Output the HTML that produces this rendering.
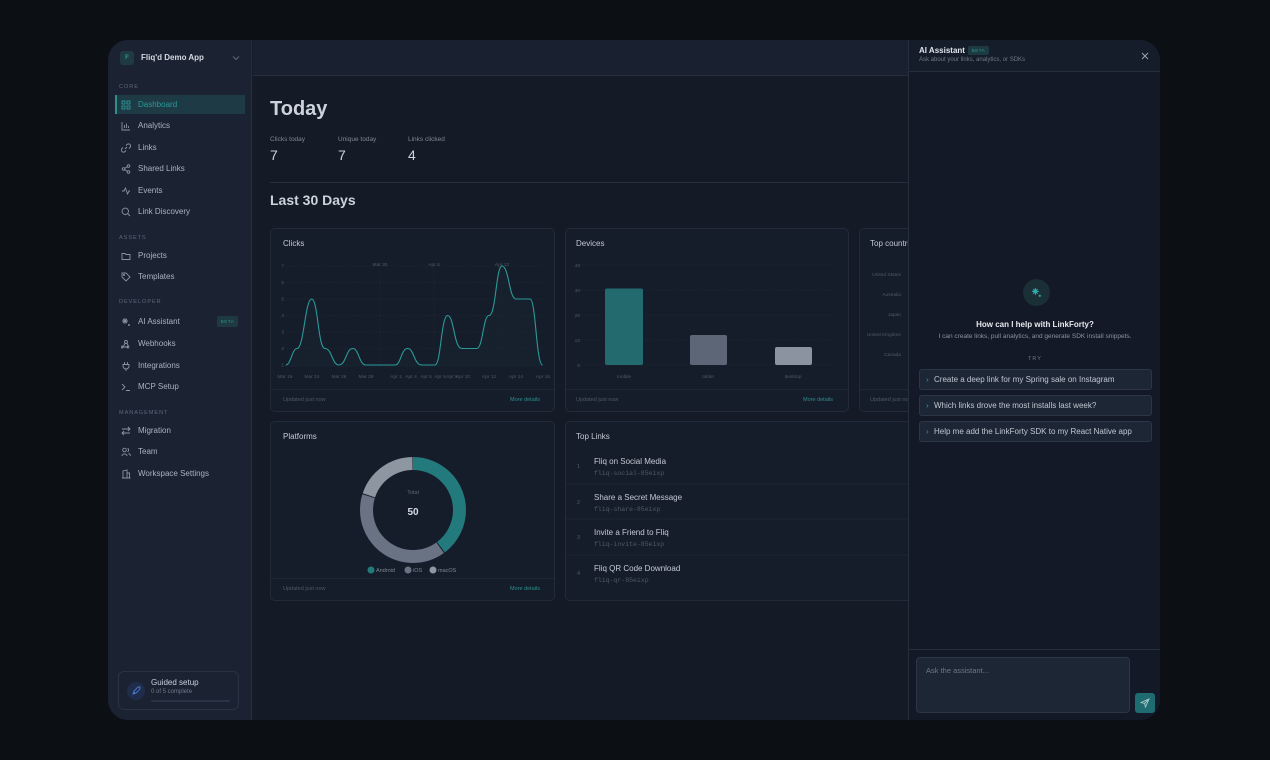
<!DOCTYPE html>
<html><head><meta charset="utf-8"><style>
*{box-sizing:border-box;margin:0;padding:0}
body{width:1270px;height:760px;background:#0c1015;font-family:"Liberation Sans",sans-serif;position:relative;overflow:hidden;color:#c9d0da}
.a{position:absolute}
.win{left:108px;top:40px;width:1052px;height:680px;border-radius:20px;overflow:hidden;background:#141a26}
.side{left:0;top:0;width:144px;height:680px;background:#1b2333;border-right:1px solid #252e3e}
.sec{font-size:5.5px;letter-spacing:1px;color:#5e6778;left:11px}
.it{left:30px;font-size:8px;color:#aab2bf;line-height:10px}
.ic{left:13px;width:10px;height:10px}
.card{background:#161d2a;border:1px solid #222b39;border-radius:5px}
.ct{font-size:8px;color:#c3cad4}
.ft{font-size:5.5px;color:#4f5868}
.md{font-size:5.5px;color:#2b8f8f}
.lbl{font-size:4.8px;fill:#4f5868;font-family:"Liberation Sans",sans-serif}
.btn{left:10px;width:233px;height:21px;background:#1d2635;border:1px solid #2c3646;border-radius:3px;font-size:8px;color:#c0c7d1;line-height:19px;padding-left:14px}
.btn:before{content:"›";position:absolute;left:6px;color:#2b9a9a;font-size:8px}
</style></head><body>
<div class="a win">
 <div class="a side">
  <div class="a" style="left:12px;top:11px;width:14px;height:14px;border-radius:3px;background:#1f3a40;color:#2a9a9a;font-size:6px;text-align:center;line-height:14px;font-weight:bold">F</div>
  <div class="a" style="left:33px;top:13px;font-size:8px;font-weight:bold;color:#d4dae2">Fliq'd Demo App</div>
  <svg class="a" style="left:124px;top:15px" width="8" height="6"><path d="M1 1.5l3 3 3-3" stroke="#5e6778" fill="none" stroke-width="1"/></svg>
  <div class="a sec" style="top:44px">CORE</div>
  <div class="a" style="left:7px;top:55px;width:130px;height:19px;background:#1e3a44;border-left:2px solid #2a9090"></div>
  <div class="a it" style="top:60px;color:#2a9a9a">Dashboard</div>
  <svg class="a ic" style="top:60px" viewBox="0 0 10 10" fill="none" stroke="#2a9a9a" stroke-width=".9"><rect x="1" y="1" width="3" height="3"/><rect x="6" y="1" width="3" height="3"/><rect x="1" y="6" width="3" height="3"/><rect x="6" y="6" width="3" height="3"/></svg>
  <div class="a it" style="top:81px">Analytics</div>
  <svg class="a ic" style="top:81px" viewBox="0 0 10 10" fill="none" stroke="#8a93a2" stroke-width=".9"><path d="M1 1v8h8M3.5 7V4M5.5 7V2.5M7.5 7V5"/></svg>
  <div class="a it" style="top:102.5px">Links</div>
  <svg class="a ic" style="top:102.5px" viewBox="0 0 10 10" fill="none" stroke="#8a93a2" stroke-width=".9"><path d="M4 6l2-2M5 2.5l1-1a2 2 0 013 3l-1 1M5 7.5l-1 1a2 2 0 01-3-3l1-1"/></svg>
  <div class="a it" style="top:124px">Shared Links</div>
  <svg class="a ic" style="top:124px" viewBox="0 0 10 10" fill="none" stroke="#8a93a2" stroke-width=".9"><circle cx="2.5" cy="5" r="1.3"/><circle cx="7.5" cy="2" r="1.3"/><circle cx="7.5" cy="8" r="1.3"/><path d="M3.7 4.4l2.6-1.7M3.7 5.6l2.6 1.7"/></svg>
  <div class="a it" style="top:145.5px">Events</div>
  <svg class="a ic" style="top:145.5px" viewBox="0 0 10 10" fill="none" stroke="#8a93a2" stroke-width=".9"><path d="M1 5h2l1.5-3 2 6 1.5-3h1"/></svg>
  <div class="a it" style="top:167px">Link Discovery</div>
  <svg class="a ic" style="top:167px" viewBox="0 0 10 10" fill="none" stroke="#8a93a2" stroke-width=".9"><circle cx="4.3" cy="4.3" r="3.2"/><path d="M6.7 6.7L9 9"/></svg>
  <div class="a sec" style="top:195px">ASSETS</div>
  <div class="a it" style="top:210.5px">Projects</div>
  <svg class="a ic" style="top:210.5px" viewBox="0 0 10 10" fill="none" stroke="#8a93a2" stroke-width=".9"><path d="M1 2.5h3l1 1h4v5H1z"/></svg>
  <div class="a it" style="top:232px">Templates</div>
  <svg class="a ic" style="top:232px" viewBox="0 0 10 10" fill="none" stroke="#8a93a2" stroke-width=".9"><path d="M1 1h4l4 4-4 4-4-4z"/><circle cx="3" cy="3" r=".6"/></svg>
  <div class="a sec" style="top:259px">DEVELOPER</div>
  <div class="a it" style="top:276.5px">AI Assistant</div>
  <svg class="a ic" style="top:276.5px" viewBox="0 0 10 10" fill="none" stroke="#8a93a2" stroke-width=".9"><path d="M4 1v6M1 4h6M2 2l4 4M6 2L2 6M8 7v2M7 8h2"/></svg>
  <div class="a" style="left:109px;top:276px;width:21px;height:11px;background:#1e3a40;border-radius:2px;font-size:4.5px;color:#2a9090;text-align:center;line-height:11px;letter-spacing:.5px">BETA</div>
  <div class="a it" style="top:299px">Webhooks</div>
  <svg class="a ic" style="top:299px" viewBox="0 0 10 10" fill="none" stroke="#8a93a2" stroke-width=".9"><circle cx="5" cy="3" r="1.5"/><path d="M4 4.5L2 8h5M6 4.5L8 8M2 8a1 1 0 100 .1M8 8a1 1 0 100 .1"/></svg>
  <div class="a it" style="top:320.5px">Integrations</div>
  <svg class="a ic" style="top:320.5px" viewBox="0 0 10 10" fill="none" stroke="#8a93a2" stroke-width=".9"><path d="M3.5 1v2.5M6.5 1v2.5M2 3.5h6v1.5a3 3 0 01-6 0zM5 8v2"/></svg>
  <div class="a it" style="top:342px">MCP Setup</div>
  <svg class="a ic" style="top:342px" viewBox="0 0 10 10" fill="none" stroke="#8a93a2" stroke-width=".9"><path d="M1 2l3 3-3 3M5 8.5h4"/></svg>
  <div class="a sec" style="top:370px">MANAGEMENT</div>
  <div class="a it" style="top:385.5px">Migration</div>
  <svg class="a ic" style="top:385.5px" viewBox="0 0 10 10" fill="none" stroke="#8a93a2" stroke-width=".9"><path d="M1 3h8M7 1l2 2-2 2M9 7H1M3 5L1 7l2 2"/></svg>
  <div class="a it" style="top:407px">Team</div>
  <svg class="a ic" style="top:407px" viewBox="0 0 10 10" fill="none" stroke="#8a93a2" stroke-width=".9"><circle cx="3.5" cy="3" r="1.8"/><path d="M.8 9a2.8 2.8 0 015.4 0M6.5 1.3a1.8 1.8 0 010 3.4M7.5 6.3A2.8 2.8 0 019.3 9"/></svg>
  <div class="a it" style="top:428.5px">Workspace Settings</div>
  <svg class="a ic" style="top:428.5px" viewBox="0 0 10 10" fill="none" stroke="#8a93a2" stroke-width=".9"><path d="M2 9V2l4-1v8M6 4h2.5v5M1 9h8.5M3.5 3.5v0M3.5 5.5v0"/></svg>
  <div class="a" style="left:10px;top:631px;width:121px;height:39px;border:1px solid #2a3343;border-radius:6px"></div>
  <div class="a" style="left:19px;top:642px;width:18px;height:18px;border-radius:50%;background:#1f2d4a"></div>
  <svg class="a" style="left:23px;top:646px" width="10" height="10" viewBox="0 0 10 10" fill="none" stroke="#4a7ad0" stroke-width=".9"><path d="M2 8l1-3 4-4h2v2L5 7zM2 8l2-2"/></svg>
  <div class="a" style="left:43px;top:638px;font-size:8px;color:#c9d0da">Guided setup</div>
  <div class="a" style="left:43px;top:649px;font-size:6px;color:#6e7787">0 of 5 complete</div>
  <div class="a" style="left:43px;top:660px;width:79px;height:2px;background:#2a3343;border-radius:1px"></div>
 </div>
 <div class="a" style="left:145px;top:0;width:655px;height:36px;background:#192130;border-bottom:1px solid #242d3c"></div>
 <div class="a" style="left:162px;top:58px;font-size:20px;color:#cdd3db;font-weight:bold">Today</div>
 <div class="a" style="left:162px;top:96px;font-size:6.5px;color:#7e8796">Clicks today</div>
 <div class="a" style="left:162px;top:107px;font-size:14px;color:#cdd3db">7</div>
 <div class="a" style="left:230px;top:96px;font-size:6.5px;color:#7e8796">Unique today</div>
 <div class="a" style="left:230px;top:107px;font-size:14px;color:#cdd3db">7</div>
 <div class="a" style="left:300px;top:96px;font-size:6.5px;color:#7e8796">Links clicked</div>
 <div class="a" style="left:300px;top:107px;font-size:14px;color:#cdd3db">4</div>
 <div class="a" style="left:162px;top:142px;width:640px;height:1px;background:#262f3e"></div>
 <div class="a" style="left:162px;top:152px;font-size:14px;color:#cdd3db;font-weight:bold">Last 30 Days</div>

 <div class="a card" style="left:162px;top:188px;width:285px;height:184px"></div>
 <div class="a card" style="left:457px;top:188px;width:284px;height:184px"></div>
 <div class="a card" style="left:751px;top:188px;width:100px;height:184px"></div>
 <div class="a card" style="left:162px;top:381px;width:285px;height:180px"></div>
 <div class="a card" style="left:457px;top:381px;width:350px;height:180px"></div>
</div>
<div class="a ct" style="left:283px;top:239px">Clicks</div>
<div class="a ct" style="left:576px;top:239px">Devices</div>
<div class="a ct" style="left:870px;top:239px;width:38px;overflow:hidden;white-space:nowrap">Top countries</div>
<div class="a ct" style="left:283px;top:432px">Platforms</div>
<div class="a ct" style="left:576px;top:432px">Top Links</div>
<div class="a" style="left:271px;top:389px;width:283px;height:1px;background:#1f2735"></div>
<div class="a" style="left:566px;top:389px;width:282px;height:1px;background:#1f2735"></div>
<div class="a" style="left:860px;top:389px;width:48px;height:1px;background:#1f2735"></div>
<div class="a" style="left:271px;top:578px;width:283px;height:1px;background:#1f2735"></div>
<div class="a ft" style="left:283px;top:397px">Updated just now</div>
<div class="a md" style="left:510px;top:397px">More details</div>
<div class="a ft" style="left:576px;top:397px">Updated just now</div>
<div class="a md" style="left:803px;top:397px">More details</div>
<div class="a ft" style="left:870px;top:397px;width:38px;overflow:hidden;white-space:nowrap">Updated just now</div>
<div class="a ft" style="left:283px;top:586px">Updated just now</div>
<div class="a md" style="left:510px;top:586px">More details</div>

<svg class="a" style="left:0;top:0" width="908" height="760">
 <g stroke="#232c3a" stroke-width=".6" stroke-dasharray="1.5 1.5">
  <path d="M286 266H545M286 282.5H545M286 299H545M286 315.5H545M286 332H545M286 348.5H545M286 365H545M380 262V367M434 262V367M502 262V367"/>
  <path d="M578 265H835M578 290H835M578 315H835M578 340H835M578 365H835"/>
 </g>
 <g class="lbl" text-anchor="end">
  <text x="284" y="267.5">7</text><text x="284" y="284">6</text><text x="284" y="300.5">5</text><text x="284" y="317">4</text><text x="284" y="333.5">3</text><text x="284" y="350">2</text><text x="284" y="366.5">1</text>
  <text x="580" y="267">40</text><text x="580" y="292">30</text><text x="580" y="317">20</text><text x="580" y="342">10</text><text x="580" y="367">0</text>
  <text x="901" y="276">United States</text><text x="901" y="296">Australia</text><text x="901" y="316">Japan</text><text x="901" y="336">United Kingdom</text><text x="901" y="356">Canada</text>
 </g>
 <g class="lbl" text-anchor="middle">
  <text x="380" y="266">Mar 30</text><text x="434" y="266">Apr 6</text><text x="502" y="266">Apr 13</text>
  <text x="285" y="378">Mar 19</text><text x="312" y="378">Mar 24</text><text x="339" y="378">Mar 26</text><text x="366" y="378">Mar 29</text><text x="396" y="378">Apr 1</text><text x="411" y="378">Apr 4</text><text x="426" y="378">Apr 5</text><text x="440" y="378">Apr 6</text><text x="452" y="378">Apr 8</text><text x="463" y="378">Apr 10</text><text x="489" y="378">Apr 12</text><text x="516" y="378">Apr 14</text><text x="543" y="378">Apr 16</text>
  <text x="624" y="378">mobile</text><text x="708" y="378">tablet</text><text x="793" y="378">desktop</text>
 </g>
 <path d="M285.7 365C291 365 292 348.5 297 348.5C304 348.5 305 299 311.7 299C318 299 318 348.5 325 348.5C332 348.5 332 365 339 365C346 365 346 348.5 352.7 348.5C359 348.5 359 365 366 365L395 365C401 365 401 348.5 407.7 348.5C414 348.5 414 365 421.7 365L435 365C441 365 441 315.5 447.7 315.5C454 315.5 454 348.5 461.7 348.5L476.7 348.5C483 348.5 483 315.5 489 315.5C496 315.5 496 266 502 266C509 266 509 299 516 299L530 299C536 299 536 365 542.7 365V367H285.7Z" fill="#1a2733" opacity=".35"/>
 <path d="M285.7 365C291 365 292 348.5 297 348.5C304 348.5 305 299 311.7 299C318 299 318 348.5 325 348.5C332 348.5 332 365 339 365C346 365 346 348.5 352.7 348.5C359 348.5 359 365 366 365L395 365C401 365 401 348.5 407.7 348.5C414 348.5 414 365 421.7 365L435 365C441 365 441 315.5 447.7 315.5C454 315.5 454 348.5 461.7 348.5L476.7 348.5C483 348.5 483 315.5 489 315.5C496 315.5 496 266 502 266C509 266 509 299 516 299L530 299C536 299 536 365 542.7 365" fill="none" stroke="#2a9a98" stroke-width="1.1"/>
 <rect x="605" y="288.5" width="38" height="76.5" rx="2" fill="#226a6d"/>
 <rect x="690" y="335" width="37" height="30" rx="2" fill="#5c6677"/>
 <rect x="775" y="347" width="37" height="18" rx="2" fill="#8a939f"/>
 <g transform="rotate(-90 413 510)" fill="none" stroke-width="13">
  <circle cx="413" cy="510" r="46.5" stroke="#237a7c" stroke-dasharray="115.9 176.3"/>
  <circle cx="413" cy="510" r="46.5" stroke="#6a7384" stroke-dasharray="0 116.9 115.9 59.4"/>
  <circle cx="413" cy="510" r="46.5" stroke="#8e96a2" stroke-dasharray="0 233.8 57.4 1"/>
 </g>
 <text x="413" y="494" text-anchor="middle" font-size="5.5" fill="#5d6676" font-family="Liberation Sans">Total</text>
 <text x="413" y="515" text-anchor="middle" font-size="10" fill="#d6dce4" font-weight="bold" font-family="Liberation Sans">50</text>
 <circle cx="371" cy="570" r="3.5" fill="#237a7c"/><circle cx="408" cy="570" r="3.5" fill="#6a7384"/><circle cx="433" cy="570" r="3.5" fill="#8e96a2"/>
 <g font-size="5.5" fill="#7e8796" font-family="Liberation Sans"><text x="376" y="572">Android</text><text x="413" y="572">iOS</text><text x="438" y="572">macOS</text></g>
 <g stroke="#1f2735" stroke-width=".8"><path d="M566 484H908M566 519H908M566 555H908"/></g>
 <g font-family="Liberation Sans">
  <g font-size="5.5" fill="#4f5868"><text x="577" y="468">1</text><text x="577" y="504">2</text><text x="577" y="539">3</text><text x="577" y="575">4</text></g>
  <g font-size="8" fill="#c3cad4"><text x="594" y="464">Fliq on Social Media</text><text x="594" y="500">Share a Secret Message</text><text x="594" y="535">Invite a Friend to Fliq</text><text x="594" y="571">Fliq QR Code Download</text></g>
  <g font-size="6.5" fill="#4f5868" font-family="Liberation Mono"><text x="594" y="475">fliq-social-85eixp</text><text x="594" y="511">fliq-share-85eixp</text><text x="594" y="546">fliq-invite-85eixp</text><text x="594" y="582">fliq-qr-85eixp</text></g>
 </g>
</svg>

<div class="a" style="left:908px;top:40px;width:252px;height:680px;background:#131926;border-left:1px solid #252e3d;border-radius:0 20px 20px 0;overflow:hidden">
 <div class="a" style="left:0;top:0;width:252px;height:32px;border-bottom:1px solid #252e3d;background:#161d2a"></div>
 <div class="a" style="left:10px;top:6px;font-size:8px;font-weight:bold;color:#e0e5ec">AI Assistant</div>
 <div class="a" style="left:59px;top:6px;width:21px;height:9px;background:#1e3a40;border-radius:2px;font-size:4.5px;color:#2a9a9a;text-align:center;line-height:9px;letter-spacing:.5px">BETA</div>
 <div class="a" style="left:10px;top:17px;font-size:6px;color:#6e7787">Ask about your links, analytics, or SDKs</div>
 <svg class="a" style="left:232px;top:12px" width="8" height="8"><path d="M1 1l6 6M7 1L1 7" stroke="#9aa2ae" stroke-width="1"/></svg>
 <div class="a" style="left:114px;top:239px;width:27px;height:27px;border-radius:50%;background:#1a2f36"></div>
 <svg class="a" style="left:122px;top:247px" width="11" height="11" viewBox="0 0 10 10" fill="none" stroke="#2ab0ae" stroke-width="1"><path d="M4 1v6M1 4h6M2 2l4 4M6 2L2 6M8 7v2M7 8h2"/></svg>
 <div class="a" style="left:0;top:280px;width:252px;text-align:center;font-size:8px;font-weight:bold;color:#e6eaef">How can I help with LinkForty?</div>
 <div class="a" style="left:0;top:293px;width:252px;text-align:center;font-size:6.5px;color:#8a93a2">I can create links, pull analytics, and generate SDK install snippets.</div>
 <div class="a" style="left:0;top:316px;width:252px;text-align:center;font-size:5.5px;color:#6e7787;letter-spacing:1px">TRY</div>
 <div class="a btn" style="top:329px">Create a deep link for my Spring sale on Instagram</div>
 <div class="a btn" style="top:355px">Which links drove the most installs last week?</div>
 <div class="a btn" style="top:381px">Help me add the LinkForty SDK to my React Native app</div>
 <div class="a" style="left:0;top:609px;width:252px;height:1px;background:#252e3d"></div>
 <div class="a" style="left:7px;top:617px;width:214px;height:56px;background:#1d2635;border:1px solid #2c3646;border-radius:4px;font-size:7.5px;color:#6e7787;padding:8px 9px">Ask the assistant...</div>
 <div class="a" style="left:226px;top:653px;width:20px;height:20px;background:#1f6c70;border-radius:3px"></div>
 <svg class="a" style="left:231px;top:658px" width="10" height="10" viewBox="0 0 10 10" fill="none" stroke="#a9c9ca" stroke-width=".9"><path d="M9 1L1 4.5l3.5 1L5.5 9zM9 1L4.5 5.5"/></svg>
</div>
</body></html>
